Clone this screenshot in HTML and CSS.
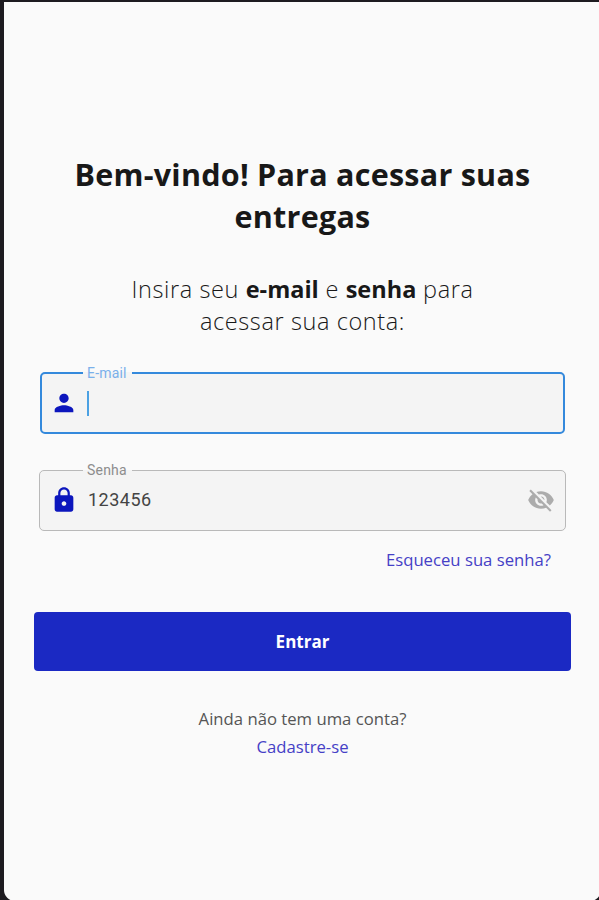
FILE: index.html
```
<!DOCTYPE html>
<html lang="pt-BR">
<head>
    <meta charset="UTF-8">
    <meta name="viewport" content="width=device-width, initial-scale=1.0">
    <title>Login</title>
    <link rel="stylesheet" href="styles.css">
</head>
<body>
    <main class="screen">
        <h1>Bem-vindo! Para acessar suas<br>entregas</h1>
        <p class="subtitle">Insira seu <strong>e-mail</strong> e <strong>senha</strong> para<br>acessar sua conta:</p>

        <form>
            <fieldset class="field field-active">
                <legend>E-mail</legend>
                <div class="field-row">
                    <svg class="icon" viewBox="0 0 24 24"><path d="M12 12c2.21 0 4-1.79 4-4s-1.79-4-4-4-4 1.79-4 4 1.79 4 4 4zm0 2c-2.67 0-8 1.34-8 4v2h16v-2c0-2.66-5.33-4-8-4z"/></svg>
                    <span class="caret"></span>
                </div>
            </fieldset>

            <fieldset class="field">
                <legend>Senha</legend>
                <div class="field-row">
                    <svg class="icon" viewBox="0 0 24 24"><path d="M18 8h-1V6c0-2.76-2.24-5-5-5S7 3.24 7 6v2H6c-1.1 0-2 .9-2 2v10c0 1.1.9 2 2 2h12c1.1 0 2-.9 2-2V10c0-1.1-.9-2-2-2zm-6 9c-1.1 0-2-.9-2-2s.9-2 2-2 2 .9 2 2-.9 2-2 2zm3.1-9H8.9V6c0-1.71 1.39-3.1 3.1-3.1 1.71 0 3.1 1.39 3.1 3.1v2z"/></svg>
                    <input type="text" value="123456" aria-label="Senha">
                    <svg class="icon icon-eye" viewBox="0 0 24 24"><path d="M12 7c2.76 0 5 2.24 5 5 0 .65-.13 1.26-.36 1.83l2.92 2.92c1.51-1.26 2.7-2.89 3.43-4.75-1.73-4.39-6-7.5-11-7.5-1.4 0-2.74.25-3.98.7l2.16 2.16C10.74 7.13 11.35 7 12 7zM2 4.27l2.28 2.28.46.46C3.08 8.3 1.78 10.02 1 12c1.73 4.39 6 7.5 11 7.5 1.55 0 3.03-.3 4.38-.84l.42.42L19.73 22 21 20.73 3.27 3 2 4.27zM7.53 9.8l1.55 1.55c-.05.21-.08.43-.08.65 0 1.66 1.34 3 3 3 .22 0 .44-.03.65-.08l1.55 1.55c-.67.33-1.41.53-2.2.53-2.76 0-5-2.24-5-5 0-.79.2-1.53.53-2.2zm4.31-.78l3.15 3.15.02-.16c0-1.66-1.34-3-3-3l-.17.01z"/></svg>
                </div>
            </fieldset>

            <a class="forgot" href="#">Esqueceu sua senha?</a>
            <button type="button" class="btn">Entrar</button>
        </form>

        <p class="signup">Ainda não tem uma conta?<br><a href="#">Cadastre-se</a></p>
    </main>
</body>
</html>
```
FILE: styles.css
```
:root {
    --primary: #1b29c3;
    --icon: #0c16bd;
    --focus: #3489dc;
    --link: #4540c6;
    --page: #fafafa;
    --field: #f4f4f4;
}

* {
    box-sizing: border-box;
}

body {
    margin: 0;
    height: 900px;
    padding: 2px 0 0 4px;
    overflow: hidden;
    background: #1d1b20;
    font-family: "Open Sans", sans-serif;
    color: #181818;
}

.screen {
    width: 597px;
    height: 899px;
    padding: 151px 30px 0;
    background: var(--page);
    border-radius: 0 0 11px 11px;
    text-align: center;
}

h1 {
    margin: 0;
    font-size: 30.5px;
    font-weight: 700;
    line-height: 42px;
    letter-spacing: 0.25px;
}

.subtitle {
    margin: 36px 0 0;
    font-size: 23.5px;
    font-weight: 300;
    line-height: 32px;
    letter-spacing: 0.6px;
}

.subtitle strong {
    font-weight: 700;
    letter-spacing: 0;
}

form {
    display: flex;
    flex-direction: column;
    margin-top: 28px;
}

.field {
    height: 69px;
    margin: 0 5px 28px;
    padding: 0 10px 0 10px;
    border: 1px solid #b9b9b9;
    border-radius: 5px;
    background: var(--field);
    text-align: left;
}

.field legend {
    height: 16px;
    margin-left: 33px;
    padding: 0 5px 0 4px;
    font-family: Roboto, sans-serif;
    font-size: 14px;
    line-height: 16px;
    letter-spacing: 0.2px;
    color: #8d8d8d;
}

.field-active {
    margin: 0 6px 28px;
    padding-left: 8px;
    border: 2px solid var(--focus);
}

.field-active legend {
    color: #7ab0ea;
}

.field-row {
    display: flex;
    align-items: center;
    height: 43px;
}

.field-active .field-row {
    height: 44px;
}

.icon {
    flex: none;
    width: 28px;
    height: 28px;
    fill: var(--icon);
}

.icon-eye {
    fill: #acacac;
}

.caret {
    width: 2px;
    height: 25px;
    margin-left: 9px;
    background: #4ba1e3;
}

.field input {
    flex: 1;
    min-width: 0;
    margin-left: 10px;
    padding: 0;
    border: 0;
    outline: 0;
    background: none;
    font-family: Roboto, sans-serif;
    font-size: 18px;
    letter-spacing: 0.5px;
    color: #444;
}

.forgot {
    align-self: flex-end;
    margin: -11px 20px 0 0;
    font-size: 16.7px;
    line-height: 24px;
}

a {
    color: var(--link);
    text-decoration: none;
}

.btn {
    height: 59px;
    margin-top: 40px;
    border: 0;
    border-radius: 4px;
    background: var(--primary);
    font-family: inherit;
    font-size: 17px;
    font-weight: 700;
    color: #fff;
}

.signup {
    margin: 34px 0 0;
    font-size: 16.7px;
    line-height: 28px;
    color: #555;
}
```
